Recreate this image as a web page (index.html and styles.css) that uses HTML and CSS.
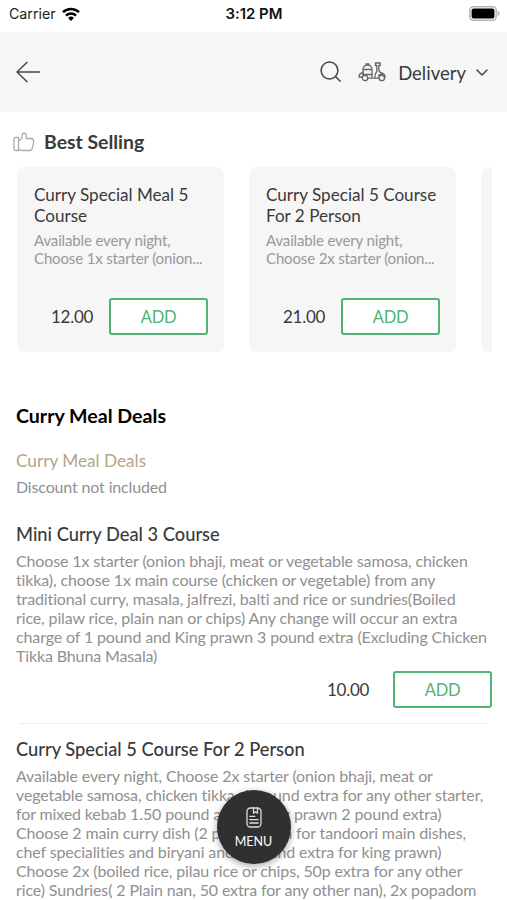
FILE: index.html
```html
<!DOCTYPE html>
<html lang="en">
<head>
    <meta charset="UTF-8">
    <meta name="viewport" content="width=device-width, initial-scale=1.0">
    <title>Menu</title>
    <link rel="stylesheet" href="styles.css">
</head>
<body>
    <!-- Status Bar -->
    <div class="status-bar">
        <div class="carrier">
            <span>Carrier</span>
            <svg width="18" height="14" viewBox="0 0 18 14" fill="none" stroke="#000" stroke-width="2.5">
                <path d="M1 5.2a11.4 11.4 0 0 1 16 0"/>
                <path d="M4 8.6a7.1 7.1 0 0 1 10 0"/>
                <path d="M9 14l-2.9-3a4.2 4.2 0 0 1 5.8 0z" fill="#000" stroke="none"/>
            </svg>
        </div>
        <span class="time">3:12 PM</span>
        <svg class="battery" width="31" height="15" viewBox="0 0 31 15">
            <rect x="0.8" y="0.8" width="26.4" height="13.4" rx="3.6" fill="#fff" stroke="#b5b5b5" stroke-width="1.5"/>
            <rect x="2.6" y="2.6" width="22.8" height="9.8" rx="2" fill="#000"/>
            <path d="M28.6 5v5c1.6-.6 2-1.5 2-2.5s-.4-1.9-2-2.5z" fill="#b5b5b5"/>
        </svg>
    </div>

    <!-- Header -->
    <div class="header">
        <svg class="back" width="24" height="22" viewBox="0 0 24 22" fill="none" stroke="#444" stroke-width="1.4" stroke-linecap="round" stroke-linejoin="round">
            <path d="M11 1.2L1 11l10 9.8M1 11h22.5"/>
        </svg>
        <div class="header-actions">
            <svg width="22" height="22" viewBox="0 0 22 22" fill="none" stroke="#444" stroke-width="1.5" stroke-linecap="round">
                <circle cx="9.5" cy="9.5" r="8.4"/>
                <path d="M15.5 15.5l4.7 4.7"/>
            </svg>
            <svg class="scooter" width="28" height="20" viewBox="0 0 28 20" fill="none" stroke="#666" stroke-width="1.3" stroke-linecap="round" stroke-linejoin="round">
                <path d="M5 12V7.500a4.500 4.500 0 0 1 9 0V15M5 7.500h9M8 3V1.800h3V3"/>
                <path d="M5 10.500c-2.500.5-4 2-4 4.500h3M4.500 12.500H14"/>
                <circle cx="7" cy="16" r="2.700"/>
                <path d="M10 16.200h11M17 16c-.3-3 0-4.500 1.800-6.500V3.500h-1.300V1h4.700v2.500h-1.400v4.500c.5 2 2 3 4.200 3.500 1.500.6 2.200 1.500 2.200 3.500"/>
                <path d="M20.500 13.500c1.500-1.500 4.500-1.500 5.800.5"/>
                <circle cx="23.800" cy="16" r="2.700"/>
            </svg>
            <span class="delivery">Delivery</span>
            <svg width="12" height="8" viewBox="0 0 12 8" fill="none" stroke="#444" stroke-width="1.5" stroke-linecap="round" stroke-linejoin="round">
                <path d="M1 2l5 5 5-5"/>
            </svg>
        </div>
    </div>

    <!-- Best Selling -->
    <div class="best-title">
        <svg width="22" height="20" viewBox="0 0 22 20" fill="none" stroke="#aaa" stroke-width="1.3" stroke-linejoin="round">
            <path d="M5.500 5.500H2.700Q1 5.500 1 7.200v9.600q0 1.700 1.700 1.700h2.800z"/>
            <path d="M5.500 8.500C8 8 9.300 6.200 9.300 3.500c0-1.700.6-2.500 1.700-2.500 2 0 2.600 2 2.200 5.500h5q2.500.3 2.500 3-.3 4-1.600 7.200-.8 1.800-2.800 1.800H9q-2 0-3.500-1.500"/>
        </svg>
        <h2>Best Selling</h2>
    </div>
    <div class="cards">
        <div class="card">
            <h3>Curry Special Meal 5<br>Course</h3>
            <p>Available every night,<br>Choose 1x starter (onion...</p>
            <div class="buy">
                <span class="price">12.00</span>
                <button class="add-button">ADD</button>
            </div>
        </div>
        <div class="card">
            <h3>Curry Special 5 Course<br>For 2 Person</h3>
            <p>Available every night,<br>Choose 2x starter (onion...</p>
            <div class="buy">
                <span class="price">21.00</span>
                <button class="add-button">ADD</button>
            </div>
        </div>
        <div class="card"></div>
    </div>

    <!-- Menu List -->
    <div class="menu">
        <h2>Curry Meal Deals</h2>
        <div class="category">Curry Meal Deals</div>
        <div class="note">Discount not included</div>

        <div class="item">
            <h3>Mini Curry Deal 3 Course</h3>
            <p>
                Choose 1x starter (onion bhaji, meat or vegetable samosa, chicken<br>
                tikka), choose 1x main course (chicken or vegetable) from any<br>
                traditional curry, masala, jalfrezi, balti and rice or sundries(Boiled<br>
                rice, pilaw rice, plain nan or chips) Any change will occur an extra<br>
                charge of 1 pound and King prawn 3 pound extra (Excluding Chicken<br>
                Tikka Bhuna Masala)
            </p>
            <div class="buy">
                <span class="price">10.00</span>
                <button class="add-button">ADD</button>
            </div>
        </div>

        <div class="item">
            <h3>Curry Special 5 Course For 2 Person</h3>
            <p>
                Available every night, Choose 2x starter (onion bhaji, meat or<br>
                vegetable samosa, chicken tikka, 1 pound extra for any other starter,<br>
                for mixed kebab 1.50 pound and to king prawn 2 pound extra)<br>
                Choose 2 main curry dish (2 pound each for tandoori main dishes,<br>
                chef specialities and biryani and 3 pound extra for king prawn)<br>
                Choose 2x (boiled rice, pilau rice or chips, 50p extra for any other<br>
                rice) Sundries( 2 Plain nan, 50 extra for any other nan), 2x popadom
            </p>
        </div>
    </div>

    <!-- Floating Menu Button -->
    <button class="menu-button">
        <svg width="16" height="21" viewBox="0 0 16 21" fill="none" stroke="#ddd" stroke-width="1.3" stroke-linecap="round" stroke-linejoin="round">
            <rect x="1" y="1" width="14" height="19" rx="3.5"/>
            <path d="M7.500 1v5.200l2-1.300 2 1.300V1M3.800 9.300h5M3.800 12.600h8.400M3.800 16h8.400"/>
        </svg>
        <span>MENU</span>
    </button>
</body>
</html>
```
FILE: styles.css
```css
/* General Styles */
* {
    box-sizing: border-box;
}

body {
    font-family: Lato, sans-serif;
    font-variant-ligatures: none;
    margin: 0;
    height: 900px;
    overflow: hidden;
    background: #fff;
    color: #3a3a3a;
}

h2, h3, p {
    margin: 0;
}

svg {
    display: block;
    flex-shrink: 0;
}

/* Status Bar */
.status-bar {
    display: grid;
    grid-template-columns: 1fr auto 1fr;
    align-items: center;
    height: 32px;
    padding: 0 8px 5px 9px;
    font-family: Inter, sans-serif;
    font-size: 14.2px;
    color: #222;
}

.carrier {
    display: flex;
    align-items: center;
    gap: 6px;
}

.time {
    font-size: 14.9px;
    font-weight: 600;
    color: #111;
}

.battery {
    justify-self: end;
    margin-right: -1px;
}

/* Header */
.header {
    display: flex;
    justify-content: space-between;
    align-items: center;
    height: 80px;
    padding: 0 19px 0 16px;
    background: #f6f6f6;
}

.header-actions {
    display: flex;
    align-items: center;
}

.scooter {
    margin-left: 16px;
}

.delivery {
    margin: 2px 10px 0 12px;
    font-size: 18.5px;
}

/* Best Selling */
.best-title {
    display: flex;
    align-items: center;
    gap: 9px;
    height: 55px;
    padding: 5px 0 0 13px;
}

h2 {
    font-size: 19.4px;
    line-height: 24px;
}

.cards {
    display: flex;
    gap: 25px;
    margin: 0 15px 0 17px;
    overflow: hidden;
}

.card {
    flex: 0 0 207px;
    height: 185px;
    padding: 18px 16px 0 17px;
    border-radius: 7px;
    background: #f6f6f6;
}

.card h3 {
    font-size: 17.1px;
    font-weight: 400;
    line-height: 20.5px;
    white-space: nowrap;
}

.card p {
    margin: 6px 0 31px;
    font-size: 15px;
    letter-spacing: -0.14px;
    line-height: 17.5px;
    color: #999;
    white-space: nowrap;
}

.buy {
    display: flex;
    justify-content: flex-end;
    align-items: center;
}

.price {
    font-size: 17px;
    letter-spacing: -0.3px;
}

.add-button {
    width: 99px;
    height: 37px;
    margin-left: 16px;
    padding: 0;
    border: 2px solid #4fb474;
    border-radius: 3px;
    background: #fff;
    font: 16.5px Lato, sans-serif;
    letter-spacing: -0.3px;
    color: #4fb474;
}

/* Menu List */
.menu {
    padding: 52px 15px 0;
}

.menu h2 {
    padding-left: 1px;
    font-size: 19.6px;
    color: #000;
}

.category {
    margin-top: 22px;
    padding-left: 1px;
    font-size: 17.2px;
    line-height: 22px;
    color: #b5a58a;
}

.note {
    margin-top: 5px;
    padding-left: 1px;
    font-size: 16px;
    letter-spacing: -0.15px;
    line-height: 20px;
    color: #909090;
}

.item h3 {
    padding: 25px 0 0 1px;
    font-size: 18.3px;
    font-weight: 500;
    line-height: 24px;
}

.item p {
    margin-top: 5px;
    padding-left: 1px;
    font-size: 16px;
    letter-spacing: -0.13px;
    line-height: 19px;
    color: #909090;
    white-space: nowrap;
}

.item .buy {
    margin-top: 6px;
}

.item .add-button {
    margin-left: 24px;
}

.item + .item {
    margin-top: 15px;
}

.item + .item::before {
    content: "";
    display: block;
    height: 1px;
    margin: 0 4px -12px;
    background: #eee;
}

/* Floating Menu Button */
.menu-button {
    position: absolute;
    left: 217px;
    top: 790px;
    display: flex;
    flex-direction: column;
    align-items: center;
    justify-content: center;
    gap: 6px;
    width: 74px;
    height: 74px;
    padding: 1px 1px 0 0;
    border: none;
    border-radius: 50%;
    background: #303030;
    box-shadow: 0 2px 7px rgba(0, 0, 0, 0.35);
    font: 12.5px Lato, sans-serif;
    color: #fff;
}
```
